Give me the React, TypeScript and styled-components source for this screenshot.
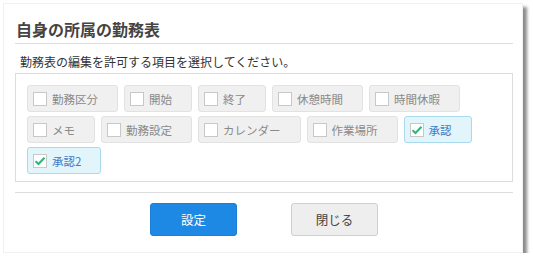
import styled, { createGlobalStyle } from 'styled-components'

const GlobalStyle = createGlobalStyle`
  html, body {
    margin: 0;
    padding: 0;
    background: #ffffff;
  }
  body {
    font-family: "Noto Sans CJK JP", "Noto Sans", sans-serif;
  }
`

const items = [
  { label: '勤務区分', checked: false },
  { label: '開始', checked: false },
  { label: '終了', checked: false },
  { label: '休憩時間', checked: false },
  { label: '時間休暇', checked: false },
  { label: 'メモ', checked: false },
  { label: '勤務設定', checked: false },
  { label: 'カレンダー', checked: false },
  { label: '作業場所', checked: false },
  { label: '承認', checked: true },
  { label: '承認2', checked: true },
]

const Dialog = styled.div`
  margin: 3px 0 0 3px;
  width: 520px;
  height: 250px;
  box-sizing: border-box;
  background: #fff;
  border: 1px solid #f0f0f0;
  box-shadow: 4px 4px 3px rgba(0, 0, 0, 0.45);
  padding: 0 9px 0 11px;
  display: flex;
  flex-direction: column;
`

const Title = styled.h2`
  margin: 0;
  padding: 14px 0 3px 1px;
  font-size: 16px;
  font-weight: 700;
  color: #444;
  line-height: 22px;
  border-bottom: 1px solid #ddd;
`

const Description = styled.p`
  margin: 0;
  padding: 9px 0 0 5px;
  font-size: 12px;
  line-height: 18px;
  color: #333;
`

const OptionBox = styled.div`
  margin-top: 2px;
  border: 1px solid #ddd;
  padding: 11px 11px 6px;
  display: flex;
  flex-wrap: wrap;
  gap: 4px 6px;
  height: 109px;
  box-sizing: border-box;
  align-content: flex-start;
`

const Option = styled.label<{ $checked: boolean }>`
  display: flex;
  align-items: center;
  gap: 5px;
  height: 27px;
  box-sizing: border-box;
  padding: 0 19px 0 5px;
  border-radius: 3px;
  border: 1px solid ${p => (p.$checked ? '#a9d9ef' : '#e2e2e2')};
  background: ${p => (p.$checked ? '#e2f5fb' : '#f0f0f0')};
  color: ${p => (p.$checked ? '#3d78c8' : '#8a8a8a')};
  font-size: 11.5px;
`

const Box = styled.span`
  width: 14px;
  height: 14px;
  box-sizing: border-box;
  border: 1px solid #c8c8c8;
  background: #fff;
  display: flex;
  align-items: center;
  justify-content: center;
`

const Footer = styled.div`
  margin-top: 10px;
  border-top: 1px solid #ddd;
  padding-top: 10px;
  display: flex;
  justify-content: center;
  gap: 54px;
`

const Button = styled.button<{ $primary?: boolean }>`
  width: 87px;
  height: 33px;
  border-radius: 3px;
  font-family: inherit;
  font-size: 12.5px;
  border: 1px solid ${p => (p.$primary ? '#1b7fd8' : '#cfcfcf')};
  background: ${p => (p.$primary ? '#1e88e5' : '#eeeeee')};
  color: ${p => (p.$primary ? '#fff' : '#444')};
`

const Check = () => (
  <svg width="12" height="10" viewBox="0 0 12 10">
    <path d="M1.5 5.2 L4.5 8 L10.5 1.8" fill="none" stroke="#2db57a" strokeWidth="2" />
  </svg>
)

export default function App() {
  return (
    <>
      <GlobalStyle />
      <Dialog>
        <Title>自身の所属の勤務表</Title>
        <Description>勤務表の編集を許可する項目を選択してください。</Description>
        <OptionBox>
          {items.map(it => (
            <Option key={it.label} $checked={it.checked}>
              <Box>{it.checked && <Check />}</Box>
              {it.label}
            </Option>
          ))}
        </OptionBox>
        <Footer>
          <Button $primary>設定</Button>
          <Button>閉じる</Button>
        </Footer>
      </Dialog>
    </>
  )
}
